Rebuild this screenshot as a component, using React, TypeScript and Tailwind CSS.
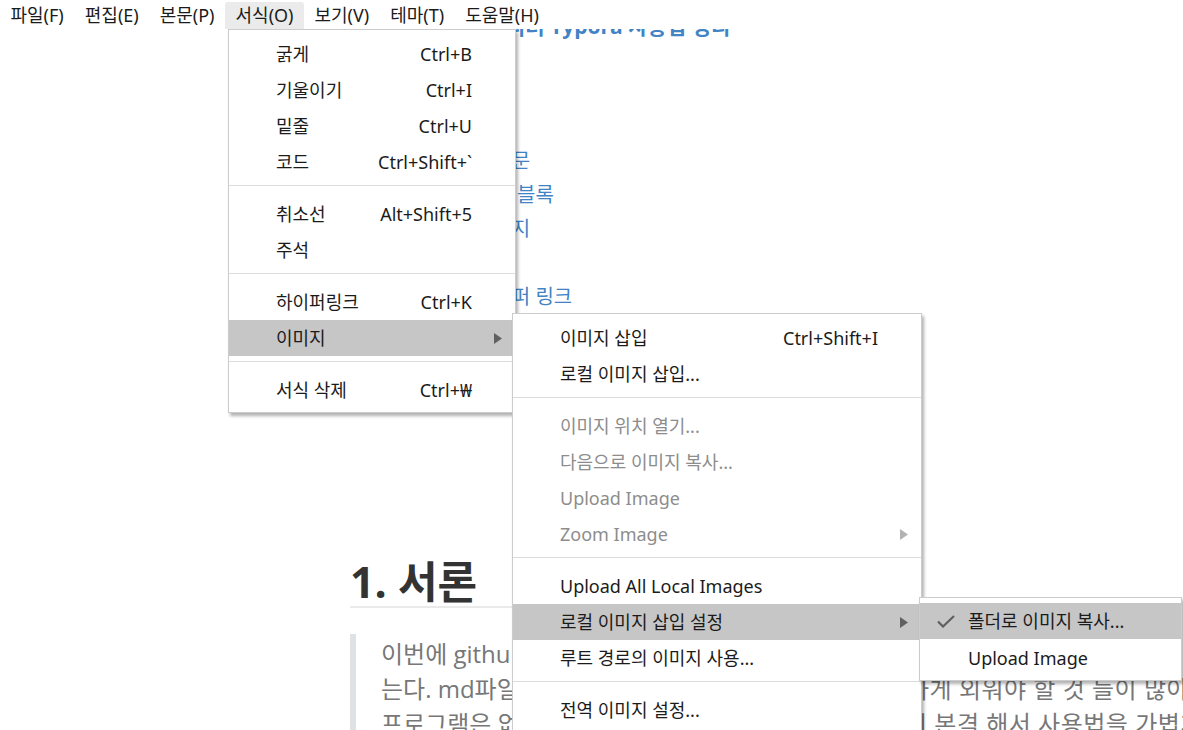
import React from 'react';

type MenuEntry =
  | { sep: true }
  | {
      sep?: false;
      label: string;
      shortcut?: string;
      disabled?: boolean;
      active?: boolean;
      arrow?: boolean;
    };

const menuFont = "font-['Noto_Sans','Noto_Sans_CJK_KR',sans-serif]";
const docFont = "font-['Open_Sans','Noto_Sans_CJK_KR',sans-serif]";

const topMenus = ['파일(F)', '편집(E)', '본문(P)', '서식(O)', '보기(V)', '테마(T)', '도움말(H)'];

const formatMenu: MenuEntry[] = [
  { label: '굵게', shortcut: 'Ctrl+B' },
  { label: '기울이기', shortcut: 'Ctrl+I' },
  { label: '밑줄', shortcut: 'Ctrl+U' },
  { label: '코드', shortcut: 'Ctrl+Shift+`' },
  { sep: true },
  { label: '취소선', shortcut: 'Alt+Shift+5' },
  { label: '주석' },
  { sep: true },
  { label: '하이퍼링크', shortcut: 'Ctrl+K' },
  { label: '이미지', arrow: true, active: true },
  { sep: true },
  { label: '서식 삭제', shortcut: 'Ctrl+₩' },
];

const imageMenu: MenuEntry[] = [
  { label: '이미지 삽입', shortcut: 'Ctrl+Shift+I' },
  { label: '로컬 이미지 삽입...' },
  { sep: true },
  { label: '이미지 위치 열기...', disabled: true },
  { label: '다음으로 이미지 복사...', disabled: true },
  { label: 'Upload Image', disabled: true },
  { label: 'Zoom Image', disabled: true, arrow: true },
  { sep: true },
  { label: 'Upload All Local Images' },
  { label: '로컬 이미지 삽입 설정', arrow: true, active: true },
  { label: '루트 경로의 이미지 사용...' },
  { sep: true },
  { label: '전역 이미지 설정...' },
];

const tocItems = ['제목', '강조', '목록', '인용문', '코드 블록', '이미지', '표', '하이퍼 링크'];

function Arrow({ disabled }: { disabled?: boolean }) {
  return (
    <svg width="8" height="11" viewBox="0 0 8 11" className="shrink-0">
      <path d="M0 0 L8 5.5 L0 11 Z" fill={disabled ? '#b3b3b3' : '#616161'} />
    </svg>
  );
}

function MenuRow({ entry }: { entry: Exclude<MenuEntry, { sep: true }> }) {
  return (
    <div
      className={`flex h-[36px] items-center pl-[47px] pr-[13px] text-[18px] ${
        entry.active ? 'bg-[#c6c6c6]' : ''
      } ${entry.disabled ? 'text-[#8d8d8d]' : 'text-[#1b1b1b]'}`}
    >
      <span className="flex-1 whitespace-nowrap">{entry.label}</span>
      {entry.shortcut && <span className="mr-[30px] whitespace-nowrap">{entry.shortcut}</span>}
      {entry.arrow && <Arrow disabled={entry.disabled} />}
    </div>
  );
}

function Menu({ entries }: { entries: MenuEntry[] }) {
  return (
    <>
      {entries.map((e, i) =>
        e.sep ? (
          <div key={i} className="mt-[5px] mb-[10px] h-px bg-[#dcdcdc]" />
        ) : (
          <MenuRow key={i} entry={e} />
        )
      )}
    </>
  );
}

export default function App() {
  return (
    <div className={`relative h-[730px] w-[1183px] overflow-hidden bg-white ${menuFont}`}>
      <div className="flex h-full flex-col">
        {/* Menu bar */}
        <div className="flex h-[29px] shrink-0 items-start bg-white pt-[2px]">
          {topMenus.map((m) => (
            <div
              key={m}
              className={`flex h-[27px] items-center rounded-t-[3px] px-[10.5px] text-[18px] text-[#1b1b1b] ${
                m === '서식(O)' ? 'bg-[#ebebeb]' : ''
              }`}
            >
              {m}
            </div>
          ))}
        </div>

        {/* Document (scrolled) */}
        <div className={`flex-1 overflow-hidden ${docFont}`}>
          <div className="-mt-[19px] w-[900px] pl-[350px]">
            <div className="h-[32px] whitespace-nowrap pl-[54px] text-[21px] leading-[32px] font-bold text-[#4183c4]">
              마크다운 에디터 Typora 사용법 정리
            </div>
            <div className="pl-[125px]">
              {tocItems.map((t) => (
                <div key={t} className="h-[34px] whitespace-nowrap text-[20px] leading-[34px] text-[#4183c4]">
                  {t}
                </div>
              ))}
            </div>

            <h1 className="mt-[244px] w-[800px] border-b-2 border-[#eaeaea] text-[43px] leading-[48px] font-bold text-[#333]">
              1. 서론
            </h1>

            <div className="mt-[26px] w-[860px] border-l-[6px] border-[#dfe2e5] pt-[2px] pl-[25px] text-[24px] leading-[35px] text-[#777]">
              <div className="whitespace-nowrap">이번에 github 블로그를 만들면서 마크다운 문법으로 글을 쓰게 되었</div>
              <div className="flex whitespace-nowrap">
                <span className="w-[526px] shrink-0 overflow-hidden">는다. md파일을 작성하는데 문법이 간단하면서도 은근</span>
                <span className="tracking-[0.5px]">하게 외워야 할 것 들이 많아서 불편했다.</span>
              </div>
              <div className="flex whitespace-nowrap">
                <span className="w-[524px] shrink-0 overflow-hidden">프로그램은 없을까 찾아보다가 Typora를 발견했고, 다</span>
                <span className="tracking-[0.5px]">시 본격 해서 사용법을 가볍게 정리해 보았다.</span>
              </div>
            </div>
          </div>
        </div>
      </div>

      {/* 서식 dropdown */}
      <div className="absolute top-[29px] left-[228px] w-[288px] border border-[#cccccc] bg-white pt-[6px] pb-[4px] shadow-[2px_3px_3px_rgba(0,0,0,0.3)]">
        <Menu entries={formatMenu} />
      </div>

      {/* 이미지 submenu */}
      <div className="absolute top-[313px] left-[512px] w-[410px] border border-[#cccccc] bg-white pt-[6px] pb-[40px] shadow-[2px_3px_3px_rgba(0,0,0,0.3)]">
        <Menu entries={imageMenu} />
      </div>

      {/* 로컬 이미지 삽입 설정 submenu */}
      <div className="absolute top-[597px] left-[919px] w-[263px] border border-[#cccccc] bg-white pt-[5px] pb-[5px] shadow-[2px_3px_3px_rgba(0,0,0,0.3)]">
        <div className="flex h-[36px] items-center bg-[#c6c6c6] pl-[17px] text-[18px] text-[#1b1b1b]">
          <svg width="18" height="13" viewBox="0 0 18 13" className="mr-[13px] shrink-0">
            <path d="M1 6.5 L6 11.5 L17 1" fill="none" stroke="#5f5f5f" strokeWidth="2.2" />
          </svg>
          <span className="whitespace-nowrap">폴더로 이미지 복사...</span>
        </div>
        <div className="flex h-[36px] items-center pt-[3px] pl-[48px] text-[18px] text-[#1b1b1b]">
          <span className="whitespace-nowrap">Upload Image</span>
        </div>
      </div>
    </div>
  );
}
